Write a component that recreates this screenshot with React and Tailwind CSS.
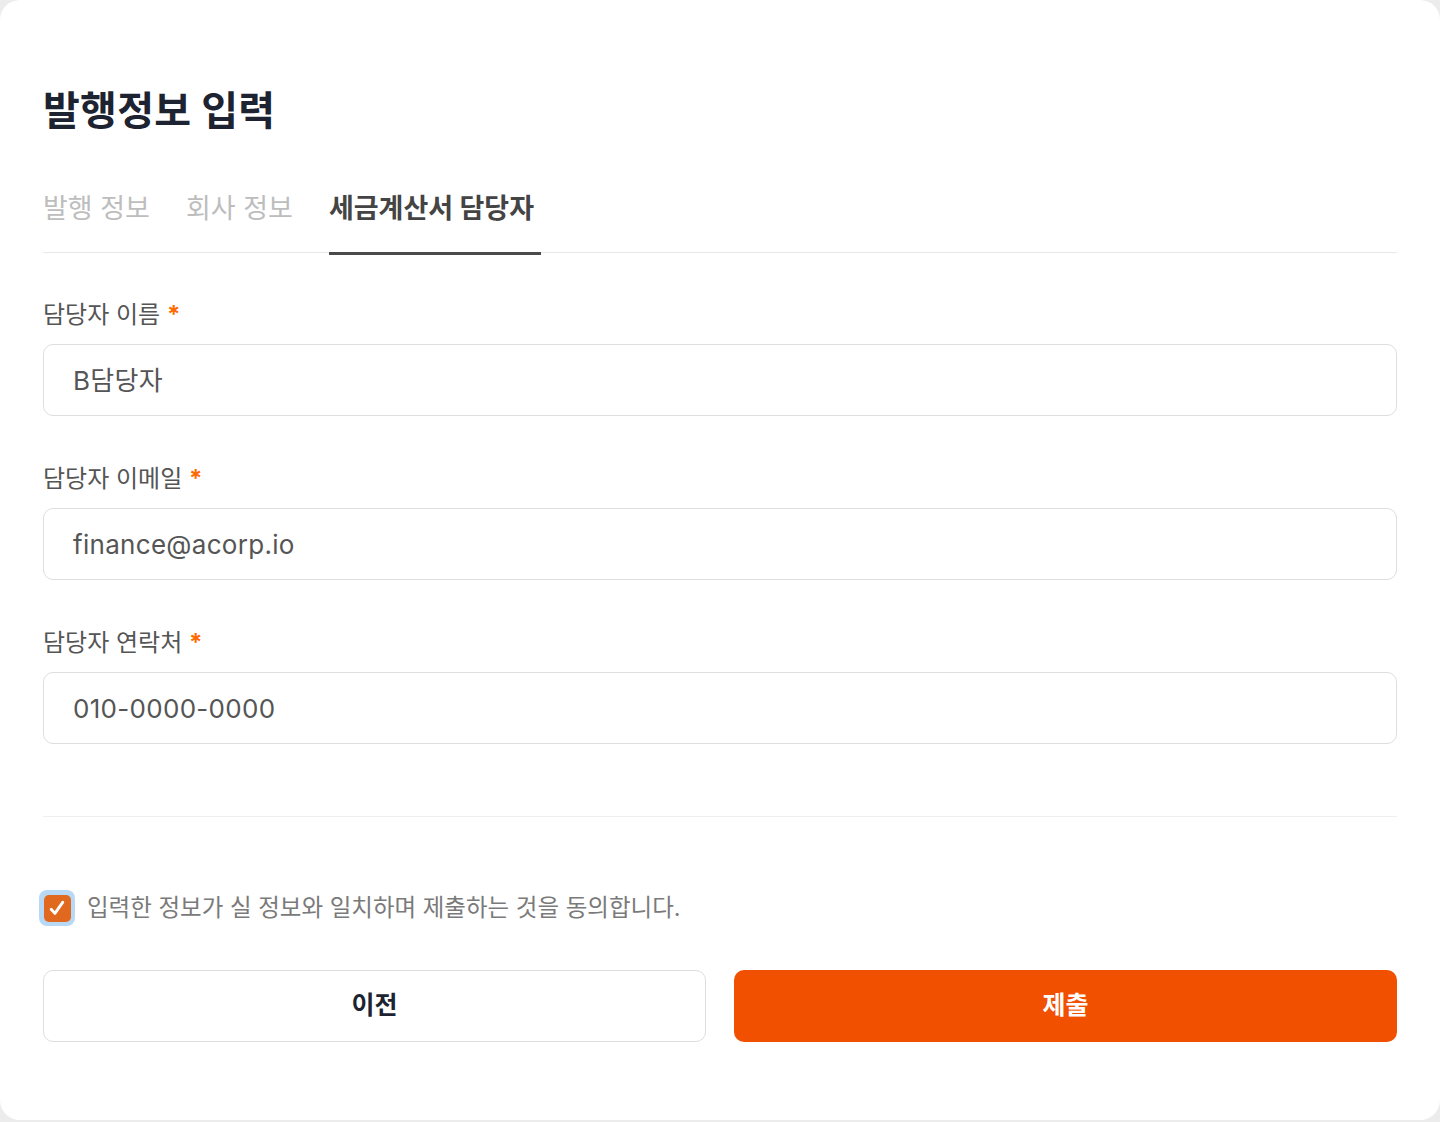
const fields = [
  { label: '담당자 이름', value: 'B담당자' },
  { label: '담당자 이메일', value: 'finance@acorp.io' },
  { label: '담당자 연락처', value: '010-0000-0000' },
];

const tabs = ['발행 정보', '회사 정보', '세금계산서 담당자'];

export default function App() {
  const font = { fontFamily: 'Inter, "Noto Sans CJK KR", sans-serif' };
  return (
    <div className="min-h-[1122px] bg-[#ececec]" style={font}>
      <div className="h-[1120px] bg-white rounded-[20px] px-[43px] pt-[88px] flex flex-col">
        {/* Title */}
        <h1 className="text-[40px] leading-[46px] font-bold text-[#1d2330] tracking-[0.3px]">발행정보 입력</h1>

        {/* Tabs */}
        <div className="mt-[57px] flex items-end gap-[36px] border-b border-[#e8e8e8]">
          {tabs.map((t, i) => {
            const active = i === tabs.length - 1;
            return (
              <div
                key={t}
                className={
                  active
                    ? 'relative pb-[25px] pr-[7px] text-[27px] leading-[36px] font-bold text-[#444]'
                    : 'pb-[25px] text-[27px] leading-[36px] text-[#bdbdbd]'
                }
              >
                {t}
                {active && <div className="absolute left-0 right-0 -bottom-[3px] h-[3px] bg-[#4a4a4a]" />}
              </div>
            );
          })}
        </div>

        {/* Fields */}
        <div className="mt-[46px] flex flex-col gap-[47px]">
          {fields.map((f) => (
            <div key={f.label} className="flex flex-col">
              <label className="text-[24px] leading-[30px] text-[#555] translate-y-[1px]">
                {f.label} <span className="text-[#ff6a00] font-bold">*</span>
              </label>
              <div className="mt-[15px] h-[72px] rounded-[10px] border border-[#dedede] flex items-center px-[29px] text-[26px] text-[#555] tracking-[0.3px]">
                {f.value}
              </div>
            </div>
          ))}
        </div>

        <div className="mt-[72px] h-px bg-[#efefef]" />

        {/* Agreement */}
        <div className="mt-[73px] flex items-center gap-[12px] -ml-[4px]">
          <div className="w-[36px] h-[36px] rounded-[8px] bg-[#b7d9f5] flex items-center justify-center">
            <div className="w-[27px] h-[27px] rounded-[5px] bg-[#e0691f] flex items-center justify-center">
              <svg width="20" height="20" viewBox="0 0 24 24" fill="none" stroke="white" strokeWidth="3.4" strokeLinecap="round" strokeLinejoin="round">
                <path d="M5 13.5l4.5 5L19 5" />
              </svg>
            </div>
          </div>
          <span className="text-[23.5px] leading-[32px] text-[#7a7a7a]">입력한 정보가 실 정보와 일치하며 제출하는 것을 동의합니다.</span>
        </div>

        {/* Buttons */}
        <div className="mt-[44px] grid grid-cols-2 gap-[28px]">
          <button className="h-[72px] rounded-[10px] border border-[#dedede] bg-white text-[25px] font-bold text-[#1d2330]">
            이전
          </button>
          <button className="h-[72px] rounded-[10px] bg-[#f05000] text-[25px] font-bold text-white">
            제출
          </button>
        </div>
      </div>
    </div>
  );
}
